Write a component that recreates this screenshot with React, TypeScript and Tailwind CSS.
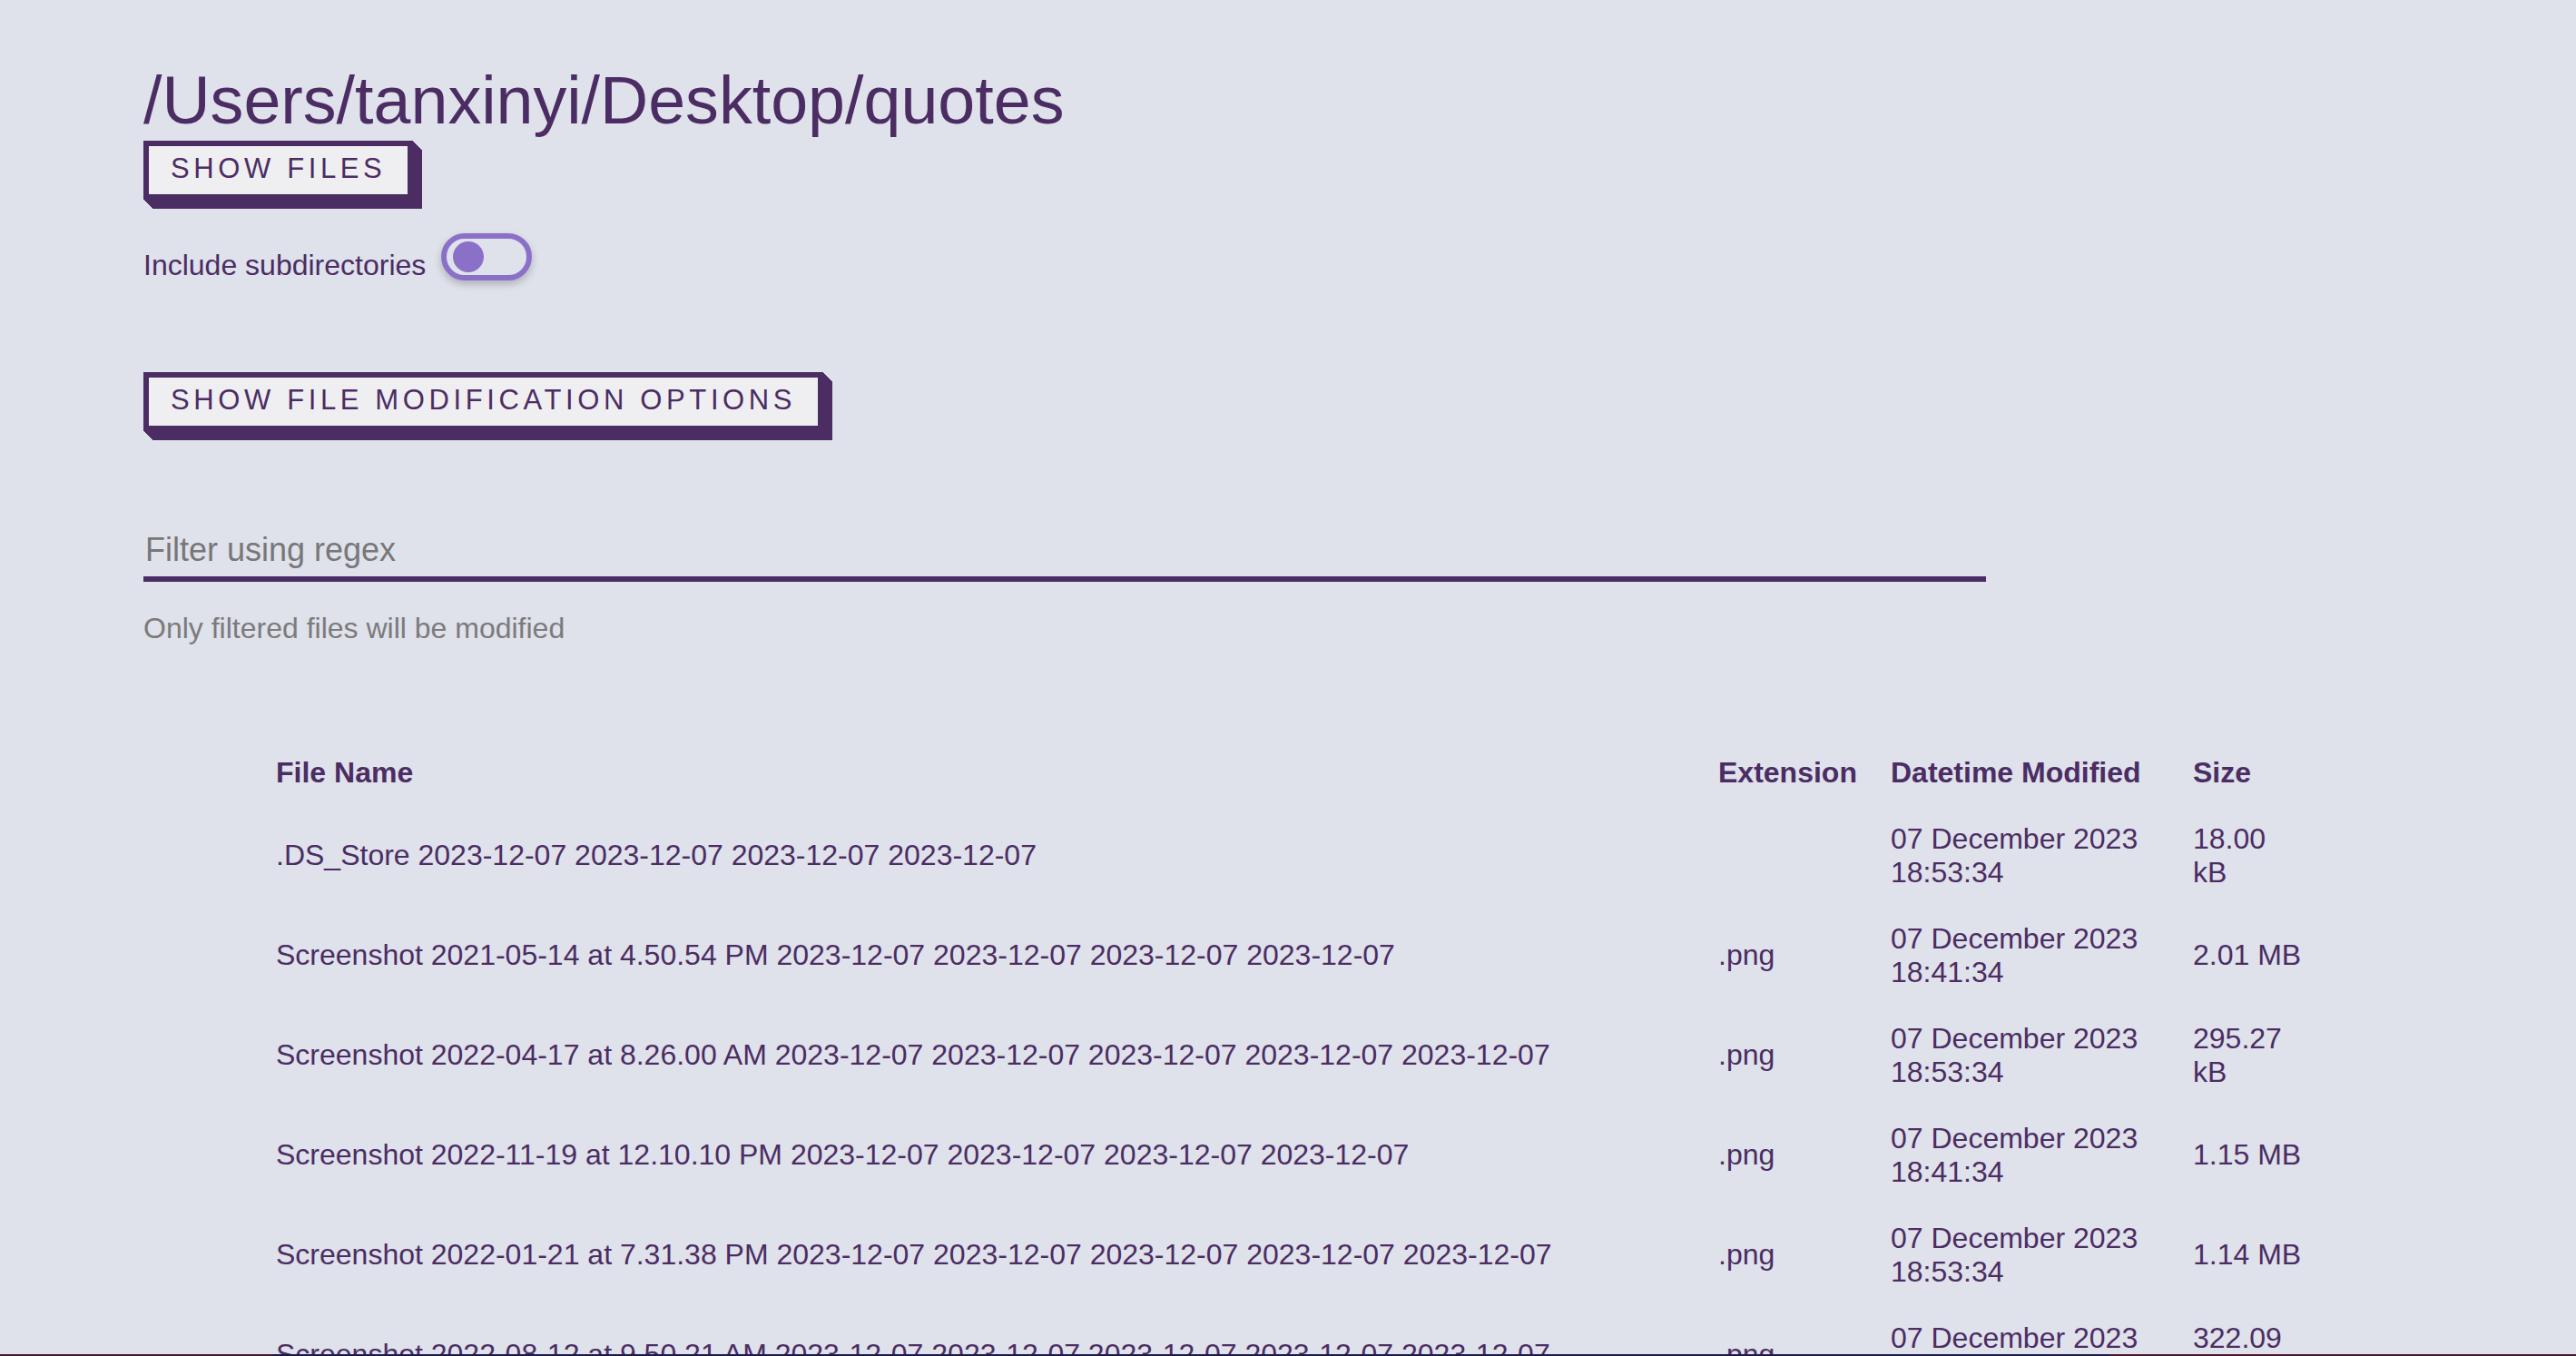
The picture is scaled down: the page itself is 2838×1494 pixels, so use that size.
import React from "react";

const rows = [
  [".DS_Store 2023-12-07 2023-12-07 2023-12-07 2023-12-07", "", "07 December 2023 18:53:34", "18.00 kB"],
  ["Screenshot 2021-05-14 at 4.50.54 PM 2023-12-07 2023-12-07 2023-12-07 2023-12-07", ".png", "07 December 2023 18:41:34", "2.01 MB"],
  ["Screenshot 2022-04-17 at 8.26.00 AM 2023-12-07 2023-12-07 2023-12-07 2023-12-07 2023-12-07", ".png", "07 December 2023 18:53:34", "295.27 kB"],
  ["Screenshot 2022-11-19 at 12.10.10 PM 2023-12-07 2023-12-07 2023-12-07 2023-12-07", ".png", "07 December 2023 18:41:34", "1.15 MB"],
  ["Screenshot 2022-01-21 at 7.31.38 PM 2023-12-07 2023-12-07 2023-12-07 2023-12-07 2023-12-07", ".png", "07 December 2023 18:53:34", "1.14 MB"],
  ["Screenshot 2022-08-12 at 9.50.21 AM 2023-12-07 2023-12-07 2023-12-07 2023-12-07 2023-12-07", ".png", "07 December 2023 18:53:34", "322.09 kB"],
  ["Screenshot 2022-03-02 at 10.11.45 AM 2023-12-07 2023-12-07 2023-12-07", ".png", "07 December 2023 18:41:34", "1.02 MB"],
];

function Btn({ children }: { children: React.ReactNode }) {
  return (
    <button
      className="self-start h-[65px] border-[6px] border-[#4b2d63] bg-[#efeff1] px-[24px] pb-[2px] text-[31px] tracking-[4.62px] uppercase text-[#4b2d63] flex items-center shadow-[1px_1px_0_#4b2d63,2px_2px_0_#4b2d63,3px_3px_0_#4b2d63,4px_4px_0_#4b2d63,5px_5px_0_#4b2d63,6px_6px_0_#4b2d63,7px_7px_0_#4b2d63,8px_8px_0_#4b2d63,9px_9px_0_#4b2d63,10px_10px_0_#4b2d63]"
    >
      {children}
    </button>
  );
}

export default function App() {
  return (
    <div
      className="h-screen overflow-hidden bg-[#dfe1eb] text-[#4b2d63] relative"
      style={{ fontFamily: '"Liberation Sans", Arial, Helvetica, sans-serif' }}
    >
      <div className="flex flex-col pl-[158px]">
        <h1 className="mt-[68px] text-[73.6px] leading-[85px] font-normal">/Users/tanxinyi/Desktop/quotes</h1>
        <div className="mt-[2px] flex">
          <Btn>Show Files</Btn>
        </div>
        <div className="mt-[37px] flex items-end gap-[17px]">
          <span className="text-[32px] leading-[1.15] mb-[-2px]">Include subdirectories</span>
          <div className="w-[100px] h-[52px] rounded-full border-[6px] border-[#8b70c8] flex items-center pl-[7px] shadow-[0_4px_8px_rgba(0,0,0,0.22)]">
            <div className="w-[34px] h-[34px] rounded-full bg-[#8b70c8]" />
          </div>
        </div>
        <div className="mt-[101px] flex">
          <Btn>Show File Modification Options</Btn>
        </div>
        <input
          className="mt-[104px] w-[2030px] bg-transparent border-0 border-b-[6px] border-[#4b2d63] text-[36px] leading-[41px] pt-[6px] pb-[9px] pl-[2px] outline-none text-[#4b2d63] placeholder:text-[#777777]"
          placeholder="Filter using regex"
        />
        <p className="mt-[33px] text-[32px] leading-[1.15] text-[#7b7b7b]">Only filtered files will be modified</p>
      </div>

      <div className="mt-[104px] mx-auto w-[2270px] text-[32px] leading-[37px]">
        <div className="grid grid-cols-[1589px_190px_333px_158px] items-center font-bold">
          <div className="pl-[20px] py-[18px]">File Name</div>
          <div className="pl-[20px] py-[18px]">Extension</div>
          <div className="pl-[20px] py-[18px]">Datetime Modified</div>
          <div className="pl-[20px] py-[18px]">Size</div>
        </div>
        {rows.map((r, i) => (
          <div key={i} className="grid grid-cols-[1589px_190px_333px_158px] items-center">
            <div className="pl-[20px] py-[18px]">{r[0]}</div>
            <div className="pl-[20px] py-[18px]">{r[1]}</div>
            <div className="pl-[20px] py-[18px]">
              <div className="w-[300px]">{r[2]}</div>
            </div>
            <div className="pl-[20px] py-[18px]">
              <div className="w-[123px]">{r[3]}</div>
            </div>
          </div>
        ))}
      </div>

      <div className="fixed bottom-0 left-0 right-0 h-[2px] flex">
        <div className="w-[300px] bg-[#4a1530]" />
        <div className="flex-1 bg-[#1c1a48]" />
        <div className="w-[514px] bg-[#4a1530]" />
      </div>
    </div>
  );
}
